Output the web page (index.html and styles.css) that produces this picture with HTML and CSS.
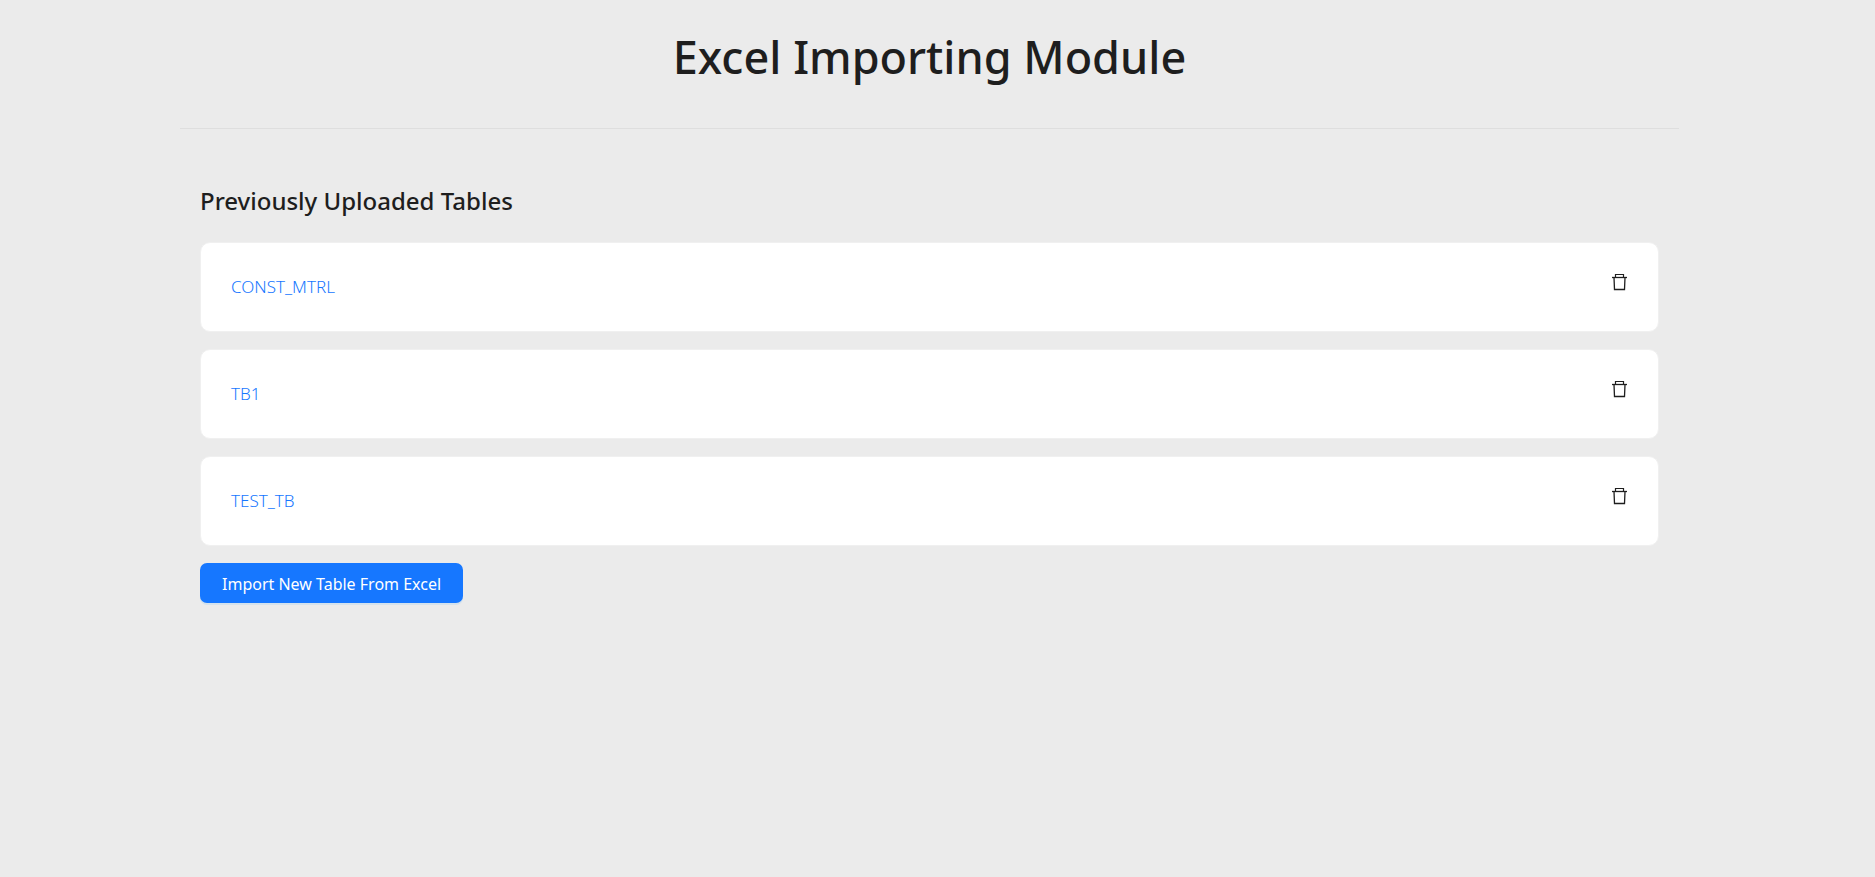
FILE: index.html
```html
<!DOCTYPE html>
<html lang="en">
<head>
<meta charset="utf-8">
<meta name="viewport" content="width=device-width, initial-scale=1">
<title>Excel Importing Module</title>
<link rel="stylesheet" href="styles.css">
</head>
<body>
<svg width="0" height="0" class="sprite" aria-hidden="true">
  <symbol id="trash" viewBox="0 0 18 18">
    <path d="M5.500 4V1.500h8V4" fill="none" stroke="currentColor" stroke-width="1.200"/>
    <path d="M2 4.500h15" fill="none" stroke="currentColor" stroke-width="1.300"/>
    <path d="M4 4.500l.5 12h10l.5-12" fill="none" stroke="currentColor" stroke-width="1.300"/>
  </symbol>
</svg>
<div class="page">
  <header class="page-header">
    <h1 class="title">Excel Importing Module</h1>
  </header>
  <main class="content">
    <h2 class="subtitle">Previously Uploaded Tables</h2>
    <ul class="tables">
      <li class="card">
        <a class="card-link" href="#">CONST_MTRL</a>
        <button class="delete" type="button" aria-label="Delete CONST_MTRL"><svg class="icon"><use href="#trash"/></svg></button>
      </li>
      <li class="card">
        <a class="card-link" href="#">TB1</a>
        <button class="delete" type="button" aria-label="Delete TB1"><svg class="icon"><use href="#trash"/></svg></button>
      </li>
      <li class="card">
        <a class="card-link" href="#">TEST_TB</a>
        <button class="delete" type="button" aria-label="Delete TEST_TB"><svg class="icon"><use href="#trash"/></svg></button>
      </li>
    </ul>
    <button class="import" type="button">Import New Table From Excel</button>
  </main>
</div>
</body>
</html>
```
FILE: styles.css
```css
* {
  box-sizing: border-box;
}

body {
  margin: 0;
  padding-right: 16px;
  background: #ebebeb;
  color: #1e1e1e;
  font-family: "Segoe UI", "Noto Sans", "Open Sans", sans-serif;
  font-size: 16px;
}

.sprite {
  position: absolute;
}

.page {
  max-width: 1499px;
  margin: 0 auto;
}

.page-header {
  padding: 27px 20px 41px;
  border-bottom: 1px solid #dedede;
}

.title {
  margin: 0;
  font-size: 45px;
  font-weight: 500;
  line-height: 60px;
  text-align: center;
}

.content {
  padding: 55px 20px;
}

.subtitle {
  margin: 0 0 25px;
  font-size: 24px;
  font-weight: 500;
  line-height: 33px;
}

.tables {
  display: flex;
  flex-direction: column;
  gap: 17px;
  margin: 0 0 17px;
  padding: 0;
  list-style: none;
}

.card {
  display: flex;
  justify-content: space-between;
  align-items: flex-start;
  padding: 30px;
  background: #fff;
  border: 1px solid #f0f0f0;
  border-radius: 10px;
}

.card-link {
  color: #1677ff;
  font-size: 17px;
  font-weight: 300;
  line-height: 28px;
  text-decoration: none;
}

.delete {
  display: flex;
  padding: 0;
  border: 0;
  background: none;
  color: #1e1e1e;
  cursor: pointer;
}

.icon {
  width: 18px;
  height: 18px;
}

.import {
  height: 40px;
  padding: 2px 22px 0;
  border: 0;
  border-radius: 7px;
  background: #1677ff;
  box-shadow: 0 2px 0 rgba(5, 145, 255, 0.1);
  color: #fff;
  font: inherit;
  cursor: pointer;
}
```
